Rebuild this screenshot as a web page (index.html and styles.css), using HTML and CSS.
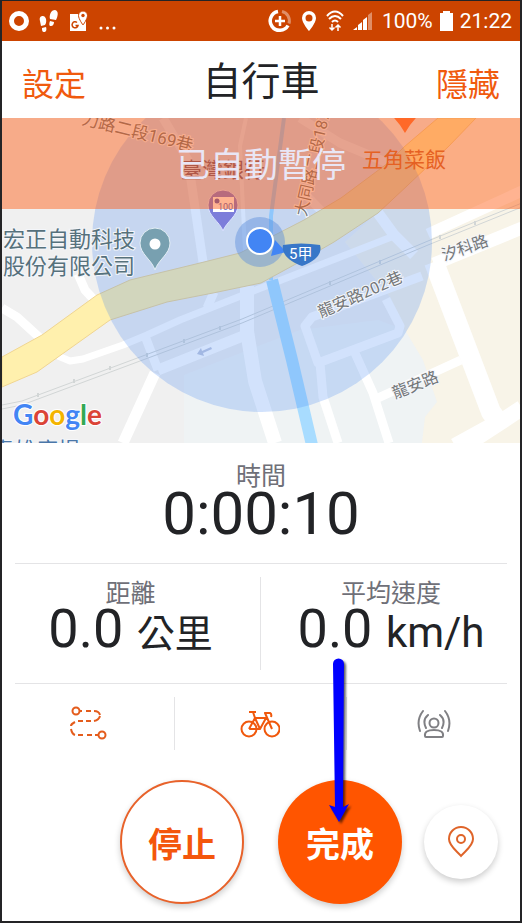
FILE: index.html
```html
<!DOCTYPE html>
<html lang="zh-Hant">
<head>
    <meta charset="UTF-8">
    <meta name="viewport" content="width=device-width, initial-scale=1.0">
    <title>自行車</title>
    <link rel="stylesheet" href="styles.css">
</head>
<body>
    <div class="screen">
        <div class="status-bar">
            <div class="status-group status-left">
                <svg width="20" height="20" viewBox="0 0 20 20"><circle cx="10" cy="10" r="7.5" fill="none" stroke="#fff" stroke-width="5"/></svg>
                <svg width="20" height="24" viewBox="0 0 20 24" fill="#fff">
                    <path d="M1 12C0 8 2 7 4 7s4 3 3 7l-1 2-4 1zM3 19l4-1c1 3 0 5-2 5s-2-2-2-4zM11 10c-1-4 1-9 5-9 4 1 3 6 1 10zM11 12l4 1c0 2-1 4-3 4s-2-2-1-5z"/>
                </svg>
                <svg width="20" height="22" viewBox="0 0 20 22">
                    <path d="M1 4h9l3 8 4-1v10H1z" fill="#fff"/>
                    <path d="M14 1a4.500 4.500 0 0 0-4.500 4.500C9.500 9 14 15 14 15s4.500-6 4.500-9.500A4.500 4.500 0 0 0 14 1z" fill="#fff" stroke="#cc4400"/>
                    <circle cx="14" cy="5.500" r="1.700" fill="#cc4400"/>
                    <path d="M8 12.500a3 3 0 1 0 1 3H6.500" fill="none" stroke="#cc4400" stroke-width="1.500"/>
                </svg>
                <svg width="18" height="20" viewBox="0 0 18 20" fill="#fff"><circle cx="2" cy="17" r="1.500"/><circle cx="8.500" cy="17" r="1.500"/><circle cx="15" cy="17" r="1.500"/></svg>
            </div>
            <div class="status-group status-right">
                <svg width="24" height="24" viewBox="0 0 24 24" fill="none" stroke="#fff">
                    <path d="M10 2.500a9.500 9.500 0 1 0 10 14" stroke-width="3.500"/>
                    <path d="M14 2.500a9.500 9.500 0 0 1 7 12" stroke-width="3" opacity=".4"/>
                    <path d="M12 7v10M7 12h10" stroke-width="2.500"/>
                </svg>
                <svg width="16" height="22" viewBox="0 0 16 22"><path fill="#fff" fill-rule="evenodd" d="M8 1a7 7 0 0 0-7 7c0 5 7 13 7 13s7-8 7-13a7 7 0 0 0-7-7zm0 3.500a3.500 3.500 0 1 1 0 7 3.500 3.500 0 0 1 0-7z"/></svg>
                <svg width="18" height="22" viewBox="1 0 18 22" fill="none" stroke="#fff" stroke-width="2">
                    <path d="M2 6c5-6 11-6 16 0M4 9c4-4 8-4 12 0M7 12c2-2 4-2 6 0"/>
                    <path d="M7 14v6M4.500 17.500L7 20l2.500-2.500M13 21v-6M10.500 17.500L13 15l2.500 2.500" stroke-width="1.500"/>
                </svg>
                <svg width="20" height="20" viewBox="0 0 20 20" fill="#fff"><path d="M0 19l4-3v3zM5 14l4-3v8H5zM10 9l4-3v13h-4z"/><path d="M15 4l4-3v18h-4z" opacity=".4"/></svg>
                <span>100%</span>
                <svg class="battery" width="13" height="20" viewBox="0 0 13 20"><path d="M0 2h3V0h7v2h3v18H0z" fill="#fff"/></svg>
                <span>21:22</span>
            </div>
        </div>

        <header class="header">
            <button class="header-btn">設定</button>
            <h1>自行車</h1>
            <button class="header-btn header-hide">隱藏</button>
        </header>

        <section class="map">
            <svg class="map-drawing" viewBox="2 118 518 325" preserveAspectRatio="xMidYMid slice">
                <rect x="2" y="118" width="518" height="325" fill="#f0f0f0"/>
                <path d="M184 375L300 330 378 320 405 330 423 360 437 402 425 417 422 443H184z" fill="#eff3f4"/>
                <path d="M345 242L408 185 476 118H520V443H422L425 417 437 402 423 360 405 330 390 297z" fill="#f8f4e8"/>

                <!-- streets -->
                <g fill="none" stroke="#fff" stroke-width="9" stroke-linejoin="round">
                    <path d="M2 308l15 9 23 21M78 274l7 16 12 13"/>
                    <path d="M58 356l12 5 13-2 40-14 24-10 33-15 81-32 133-52" stroke-width="7"/>
                    <path d="M145 336l13 34M207 308l7-16M355 353l18 40 16 50M378 398l83-38"/>
                    <path d="M158 370l90-36M155 373l-32 70M378 213l16 22 20 20M428 234l94-43" stroke-width="11"/>
                    <path d="M247 286v45l8 50 20 62" stroke-width="14"/>
                    <path d="M434 264l88-36" stroke-width="13"/>
                    <path d="M434 262l57 150 9 12" stroke-width="20"/>
                    <path d="M522 408l-52 34" stroke-width="16"/>
                    <path d="M455 446l40-22" stroke-width="16"/>
                    <path d="M422 276l-110 41-7 9 13 37 80-30 2-7-14-27M320 363l3 34 15 46"/>
                    <path d="M330 220l-25-26M300 118l40 25 60 25"/>
                    <path d="M163 118l25 42 15 102" stroke-width="9"/>
                    <path d="M246 118l-6 28 5 105" stroke-width="4"/>
                </g>

                <!-- railway -->
                <g fill="none" stroke="#d2d6d6" stroke-width="1">
                    <path d="M2 405l20-4 220-82 100-42 86-36 94-38M2 409l20-4 220-82 100-42 86-36 94-38"/>
                    <path d="M38 393v4M74 379v4M110 366v4M147 353v4M184 339v4M220 326v4M330 281v4M380 260v4M440 235v4M475 221v4" stroke-width="2"/>
                </g>

                <path d="M284 118l-13 98v64" fill="none" stroke="#a8dcff" stroke-width="4"/>
                <path d="M272 280l20 80 20 85" fill="none" stroke="#a8dcff" stroke-width="12"/>
                <path d="M2 357l40-22 55-40 33-15 70-17 40-10 64-33 37-22 47-35 16-16 34-29h38l-28 29-40 38-30 28-44 29-40 23-33 18-48 10-46 9-57 18-73 52-35 15z" fill="#fff0ad" stroke="#f0d591"/>

                <circle cx="262" cy="242" r="170" fill="#4285f4" opacity=".24"/>
                <path d="M211 347l-9 4-1-3-4 6 7 2-1-3 9-4z" fill="#a2b8e3"/>

                <!-- pins -->
                <path d="M390 114q9 8 15 19 6-11 15-19z" fill="#ff7840"/>
                <path d="M155 228a15 15 0 0 0-15 15c0 11 12 17 15 27 3-10 15-16 15-27a15 15 0 0 0-15-15z" fill="#78a0b0" stroke="#e4eff5" stroke-width="1"/>
                <circle cx="155" cy="244" r="5.500" fill="#fff"/>
                <path d="M223 190a15 15 0 0 0-15 15c0 11 12 17 15 26 3-9 15-15 15-26a15 15 0 0 0-15-15z" fill="#7c7dda" stroke="#dce2ff"/>
                <path d="M213 197h21v15h-21z" fill="#fff"/>
                <circle cx="217" cy="201" r="2.500" fill="#5c5dba"/>
                <text x="218" y="210" class="pin-text">100</text>

                <g class="road-label">
                    <text transform="translate(81 124) rotate(14)" class="road-large">力路二段169巷</text>
                    <text transform="translate(306 217) rotate(-77)">大同路二段187</text>
                    <text transform="translate(444 261) rotate(-19)">汐科路</text>
                    <text transform="translate(321 318) rotate(-24)">龍安路202巷</text>
                    <text transform="translate(395 399) rotate(-22)">龍安路</text>
                </g>
                <g class="place-label">
                    <text x="3" y="247">宏正自動科技</text>
                    <text x="3" y="274">股份有限公司</text>
                    <text x="181" y="177" class="bank">臺灣銀行</text>
                    <text x="362" y="167" class="food">五角菜飯</text>
                    <text x="-8" y="458" class="plaza">青雄廣場</text>
                </g>

                <!-- current position -->
                <circle cx="260" cy="242" r="25" fill="#5b8edb" opacity=".45"/>
                <path d="M275 240l11 12-15 4z" fill="#4285f4"/>
                <circle cx="260" cy="241" r="13" fill="#4285f4" stroke="#fff" stroke-width="2"/>
                <path d="M283 245q18-3 37 0c3 10-7 17-18 21-11-4-21-11-19-21z" fill="#3877c8"/>
                <text x="289" y="259" class="shield-text">5甲</text>

                <text x="13" y="425" class="logo"><tspan fill="#4285f4">G</tspan><tspan fill="#db4437">o</tspan><tspan fill="#f4b400">o</tspan><tspan fill="#4285f4">g</tspan><tspan fill="#34a853">l</tspan><tspan fill="#db4437">e</tspan></text>
            </svg>
            <div class="pause-banner">已自動暫停</div>
        </section>

        <main class="stats">
            <div class="stat stat-time">
                <div class="stat-label">時間</div>
                <div class="time-value">0:00:10</div>
            </div>
            <div class="stat-row">
                <div class="stat">
                    <div class="stat-label">距離</div>
                    <div class="stat-value">0.0 <span class="unit unit-zh">公里</span></div>
                </div>
                <div class="stat">
                    <div class="stat-label">平均速度</div>
                    <div class="stat-value">0.0 <span class="unit">km/h</span></div>
                </div>
            </div>
            <div class="tools">
                <button class="tool" aria-label="路線">
                    <svg width="38" height="36" viewBox="0 0 38 36" fill="none" stroke="#e45c1c" stroke-width="2">
                        <circle cx="7" cy="5" r="3.500"/><circle cx="33" cy="29" r="3.500"/>
                        <path d="M11 5h2M17 5h5M25 5q5 0 6 4M31 10q-1 4-6 5M22 15h-5M14 15H9M6 16q-4 2-4 4M2 23q1 5 4 6M9 29h5M18 29h5M26 29h3"/>
                    </svg>
                </button>
                <button class="tool" aria-label="自行車">
                    <svg width="40" height="30" viewBox="0 0 40 30" fill="none" stroke="#f0580c" stroke-width="2" stroke-linejoin="round">
                        <circle cx="9" cy="20" r="7.500"/><circle cx="32" cy="20" r="7.500"/>
                        <path d="M9 20l6-11 5 11H9M20 20l6-11H15M9 3h7M13 3l2 6M32 20L25 4h5q2 1 1 4"/>
                    </svg>
                </button>
                <button class="tool" aria-label="即時位置">
                    <svg width="36" height="32" viewBox="0 0 36 32" fill="none" stroke="#808084" stroke-width="2" stroke-linecap="round">
                        <circle cx="18" cy="15" r="4.500"/>
                        <path d="M9 28q-1-6 9-6t9 6q0 1-1 1H10q-1 0-1-1z"/>
                        <path d="M12 7q-6 5-2 13M24 7q6 5 2 13M7 3q-7 9-3 20M29 3q7 9 3 20"/>
                    </svg>
                </button>
            </div>
        </main>

        <footer class="actions">
            <button class="round-btn stop-btn">停止</button>
            <button class="round-btn finish-btn">完成
                <svg class="arrow" width="28" height="168" viewBox="0 0 28 168"><path d="M5 6a5.500 5.500 0 0 1 11 0l-1 143 6-3-10 18L1 147l6 2z" fill="#00f"/></svg>
            </button>
            <button class="round-btn pin-btn" aria-label="定位">
                <svg width="28" height="34" viewBox="0 0 28 34" fill="none" stroke="#df6429" stroke-width="2">
                    <path d="M14 2A12 12 0 0 0 2 14c0 7 8 12 12 17 4-5 12-10 12-17A12 12 0 0 0 14 2z"/><circle cx="14" cy="14" r="4"/>
                </svg>
            </button>
        </footer>
    </div>
</body>
</html>
```
FILE: styles.css
```css
* {
    box-sizing: border-box;
}

body {
    margin: 0;
    font-family: Roboto, "Noto Sans CJK TC", sans-serif;
    background-color: #fff;
    color: #222326;
}

button {
    padding: 0;
    border: none;
    background: none;
    font-family: inherit;
    cursor: pointer;
}

svg {
    display: block;
}

.screen {
    min-height: 100vh;
    border: 2px solid #242426;
    border-top-width: 1px;
}

.status-bar {
    display: flex;
    justify-content: space-between;
    align-items: center;
    height: 40px;
    padding: 0 8px 0 7px;
    background-color: #cc4400;
    color: #fff;
    font-size: 21px;
}

.status-group {
    display: flex;
    align-items: center;
}

.status-left {
    gap: 10px;
}

.status-right {
    gap: 9px;
}

.status-right span {
    line-height: 40px;
}

.battery {
    margin: 0 -2px;
}

.header {
    display: grid;
    grid-template-columns: 1fr auto 1fr;
    align-items: center;
    height: 77px;
    padding: 6px 20px 0;
}

.header h1 {
    margin: 0;
    font-size: 39px;
    font-weight: normal;
    line-height: 71px;
}

.header-btn {
    justify-self: start;
    padding-top: 4px;
    color: #f05a0e;
    font-size: 32px;
    line-height: 44px;
}

.header-hide {
    justify-self: end;
}

.map {
    position: relative;
    height: 325px;
    overflow: hidden;
}

.map-drawing {
    width: 100%;
    height: 100%;
}

.pause-banner {
    position: absolute;
    top: 0;
    left: 0;
    right: 0;
    height: 91px;
    padding-top: 4px;
    background-color: rgba(255, 86, 10, 0.45);
    color: #e9e6f5;
    font-size: 34px;
    line-height: 87px;
    text-align: center;
}

.road-label text {
    font-size: 16px;
    fill: #74787a;
    stroke: #f4f6fa;
    stroke-width: 2px;
    paint-order: stroke;
}

.road-label .road-large {
    font-size: 17px;
}

.place-label text {
    font-size: 22px;
    fill: #56717c;
    stroke: #f4f6fa;
    stroke-width: 2px;
    paint-order: stroke;
}

.place-label .bank {
    font-size: 21px;
    fill: #6d5878;
    stroke: none;
}

.place-label .food {
    font-size: 21px;
    fill: #d06a38;
    stroke: none;
}

.place-label .plaza {
    fill: #4a76a8;
}

.pin-text {
    font-size: 9px;
    fill: #5c5dba;
}

.shield-text {
    font-size: 15px;
    fill: #fff;
}

.logo {
    font-family: Lato, sans-serif;
    font-size: 28px;
    font-weight: bold;
    stroke: #fff;
    stroke-width: 2px;
    paint-order: stroke;
}

.stats {
    padding: 0 13px;
}

.stat {
    text-align: center;
}

.stat-time {
    height: 121px;
    padding-top: 20px;
    border-bottom: 1px solid #e4e4e6;
}

.stat-label {
    color: #6f7078;
    font-size: 25px;
    line-height: 28px;
}

.time-value {
    font-size: 60px;
    line-height: 46px;
}

.stat-row {
    display: grid;
    grid-template-columns: 1fr 1fr;
    height: 120px;
    padding: 13px 0;
    border-bottom: 1px solid #e4e4e6;
}

.stat-row .stat {
    padding: 3px 0 0 14px;
}

.stat-row .stat:first-child {
    padding: 3px 14px 0 0;
    border-right: 1px solid #e4e4e6;
}

.stat-value {
    font-size: 54px;
    line-height: 42px;
    white-space: nowrap;
}

.unit {
    font-size: 42px;
}

.unit-zh {
    font-size: 38px;
}

.tools {
    display: grid;
    grid-template-columns: 1fr 1fr 1fr;
    margin: 13px -13px 0;
}

.tool {
    display: flex;
    justify-content: center;
    align-items: center;
    height: 53px;
    border-right: 1px solid #e4e4e6;
}

.tool:last-child {
    border-right: none;
}

.actions {
    display: flex;
    justify-content: flex-end;
    align-items: center;
    padding: 30px 22px 16px;
}

.round-btn {
    position: relative;
    display: flex;
    justify-content: center;
    align-items: center;
    width: 124px;
    height: 124px;
    border-radius: 50%;
    background-color: #fff;
    box-shadow: 0 3px 6px rgba(0, 0, 0, 0.2);
    font-size: 34px;
    font-weight: bold;
}

.stop-btn {
    margin-right: 34px;
    border: 2px solid #e8622a;
    color: #f4560c;
}

.finish-btn {
    margin-right: 22px;
    background-color: #ff5500;
    color: #fff;
}

.pin-btn {
    width: 74px;
    height: 74px;
}

.arrow {
    position: absolute;
    left: 50px;
    bottom: 78px;
    pointer-events: none;
    filter: drop-shadow(2px 2px 1px rgba(0, 0, 0, 0.6));
}
```
